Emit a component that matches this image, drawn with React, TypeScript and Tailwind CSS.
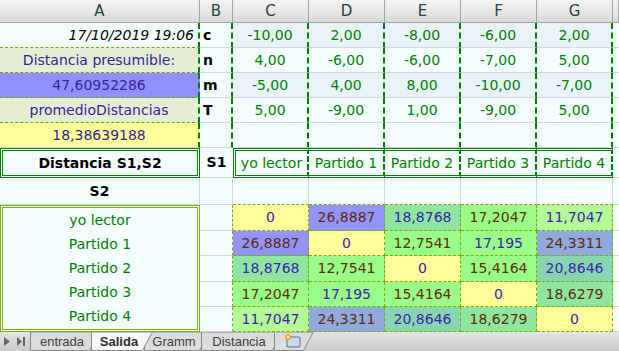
import React from 'react';

const font = 'font-["DejaVu_Sans",sans-serif]';

// plain grid lines
const gr = 'border-r border-r-[#d0d7e5]';
const gb = 'border-b border-b-[#d0d7e5]';
// dash-dot style borders (dashed approximation)
const dkR = 'border-r-2 border-r-[#008000] ![border-right-style:dashed]';
const olR = 'border-r border-r-[#7fa800] ![border-right-style:dashed]';
const olB = 'border-b border-b-[#7fa800] ![border-bottom-style:dashed]';
const ygB = 'border-b border-b-[#6aaa00] ![border-bottom-style:dashed]';

const Cell: React.FC<{ c?: string; children?: React.ReactNode }> = ({ c = '', children }) => (
  <div className={`flex items-center overflow-hidden whitespace-nowrap text-[14px] ${c}`}>{children}</div>
);

const params = [
  { k: 'c', v: ['-10,00', '2,00', '-8,00', '-6,00', '2,00'], stripe: true },
  { k: 'n', v: ['4,00', '-6,00', '-6,00', '-7,00', '5,00'], stripe: false },
  { k: 'm', v: ['-5,00', '4,00', '8,00', '-10,00', '-7,00'], stripe: true },
  { k: 'T', v: ['5,00', '-9,00', '1,00', '-9,00', '5,00'], stripe: false },
];

const leftA = [
  <Cell key="a1" c={`justify-end pr-[4px] italic text-[11px] text-black ${dkR} ${ygB}`}>17/10/2019 19:06</Cell>,
  <Cell key="a2" c={`justify-center bg-[#e3eed3] text-[#35249a] ${dkR} ${ygB}`}>Distancia presumible:</Cell>,
  <Cell key="a3" c={`justify-center bg-[#8f8fff] text-[#35249a] ${dkR} ${ygB}`}>47,60952286</Cell>,
  <Cell key="a4" c={`justify-center bg-[#e3eed3] text-[#35249a] ${dkR} ${ygB}`}>promedioDistancias</Cell>,
];

const names = ['yo lector', 'Partido 1', 'Partido 2', 'Partido 3', 'Partido 4'];

const Y = 'bg-[#ffff99]';
const BL = 'bg-[#9393ff]';
const MI = 'bg-[#8ee6a0]';
const GR = 'bg-[#99ff88]';
const ST = 'bg-[#8eaadf]';
const TE = 'bg-[#88d6b0]';
const LG = 'bg-[#b4fb98]';
const IN = 'text-[#3a22b0]';
const BR = 'text-[#5f2c05]';

const matrix: [string, string, string][][] = [
  [['0', Y, IN], ['26,8887', BL, BR], ['18,8768', MI, IN], ['17,2047', GR, BR], ['11,7047', LG, IN]],
  [['26,8887', BL, BR], ['0', Y, IN], ['12,7541', GR, BR], ['17,195', GR, IN], ['24,3311', ST, BR]],
  [['18,8768', MI, IN], ['12,7541', GR, BR], ['0', Y, IN], ['15,4164', GR, BR], ['20,8646', TE, IN]],
  [['17,2047', GR, BR], ['17,195', GR, IN], ['15,4164', GR, BR], ['0', Y, IN], ['18,6279', MI, BR]],
  [['11,7047', LG, IN], ['24,3311', ST, BR], ['20,8646', TE, IN], ['18,6279', MI, BR], ['0', Y, IN]],
];

const Tab: React.FC<{ w: number; label: string; active?: boolean }> = ({ w, label, active }) => (
  <div className={`relative -ml-[9px] h-[19px] flex items-center justify-center ${active ? 'z-10' : ''}`} style={{ width: w }}>
    <svg className="absolute inset-0" width={w} height={19}>
      <polygon
        points={`0.5,0 ${w - 0.5},0 ${w - 10.5},18.5 0.5,18.5`}
        fill={active ? '#f7f7f7' : '#dcdcdc'}
        stroke="#8a8a8a"
      />
    </svg>
    <span
      className={`relative pr-[6px] font-["Liberation_Sans",Arial,sans-serif] text-[13px] ${
        active ? 'font-bold text-[#303030]' : 'text-[#404040]'
      }`}
    >
      {label}
    </span>
  </div>
);

const App: React.FC = () => {
  return (
    <div className={`w-[619px] h-[351px] overflow-hidden bg-[#f4fefe] ${font}`}>
      {/* column headers */}
      <div className="grid grid-cols-[200px_33px_76px_76px_76px_76px_76px_6px] h-[23px] bg-gradient-to-b from-[#f4f4f4] to-[#dadada] border-b border-[#a5a5a5] text-[15px] text-[#27413e]">
        {['A', 'B', 'C', 'D', 'E', 'F', 'G', ''].map((h, i) => (
          <div key={i} className="flex items-center justify-center border-r border-[#a8a8a8]">{h}</div>
        ))}
      </div>

      {/* sheet body */}
      <div className="grid grid-cols-[200px_33px_76px_76px_76px_76px_76px_6px] grid-rows-[25px_25px_25px_25px_25px_30px_27px_26px_25px_26px_25px_25px] h-[308px]">
        {params.map((p, r) => (
          <React.Fragment key={p.k}>
            {leftA[r]}
            <Cell c={`pl-[3px] font-bold text-[13px] text-black ${dkR} ${gb}`}>{p.k}</Cell>
            {p.v.map((v, i) => (
              <Cell key={i} c={`justify-center text-[#008000] ${p.stripe ? 'bg-[#e9f4fa]' : ''} ${dkR} ${gb}`}>{v}</Cell>
            ))}
            <Cell c={gb} />
          </React.Fragment>
        ))}

        {/* row 5 */}
        <Cell c={`justify-center bg-[#ffff99] text-[#35249a] ${dkR} ${gb}`}>18,38639188</Cell>
        <Cell c={`${dkR} ${gb}`} />
        {[0, 1, 2, 3, 4].map((i) => (
          <Cell key={i} c={`${dkR} ${gb}`} />
        ))}
        <Cell c={gb} />

        {/* row 6 */}
        <Cell c="justify-center font-bold text-[13px] text-black border-[3px] border-double border-[#008000]">Distancia S1,S2</Cell>
        <Cell c={`justify-center font-bold text-[13px] text-black ${gb}`}>S1</Cell>
        {names.map((n, i) => (
          <Cell
            key={n}
            c={`justify-center text-[#008000] border-t-[3px] border-b-[3px] border-t-[#008000] border-b-[#008000] ![border-top-style:double] ![border-bottom-style:double] ${dkR} ${
              i === 0 ? 'border-l-[3px] border-l-[#008000] ![border-left-style:double]' : ''
            }`}
          >
            {n}
          </Cell>
        ))}
        <Cell c={gb} />

        {/* row 7 */}
        <Cell c={`justify-center font-bold text-[13px] text-black ${gr} ${gb}`}>S2</Cell>
        <Cell c={`${gr} ${gb}`} />
        {[0, 1, 2, 3, 4].map((i) => (
          <Cell key={i} c={`${gr} ${olB}`} />
        ))}
        <Cell c={gb} />

        {/* rows 8-12 */}
        {matrix.map((row, r) => (
          <React.Fragment key={r}>
            {r === 0 && (
              <div className="row-span-5 flex flex-col border-[3px] border-double border-[#7fb000] text-[14px] text-[#008000]">
                {names.map((n, i) => (
                  <div key={n} className={`flex items-center justify-center ${i === 1 || i === 3 ? 'h-[25px]' : 'h-[25.5px]'}`}>{n}</div>
                ))}
              </div>
            )}
            <Cell c={`${olR} ${gb}`} />
            {row.map(([v, bg, tc], i) => (
              <Cell key={i} c={`justify-center ${bg} ${tc} ${olR} ${olB}`}>{v}</Cell>
            ))}
            <Cell c={gb} />
          </React.Fragment>
        ))}
      </div>

      {/* sheet tabs */}
      <div className="flex items-start h-[20px] border-t border-[#b0b0b0] bg-gradient-to-b from-[#e4e4e4] to-[#cbcbcb] text-[#404040]">
        <div className="flex items-center gap-[7px] w-[39px] h-[19px] pl-[4px]">
          <svg width="6" height="9" viewBox="0 0 6 9"><polygon points="0,0 6,4.5 0,9" fill="#666" /></svg>
          <svg width="8" height="9" viewBox="0 0 8 9"><polygon points="0,0 5,4.5 0,9" fill="#666" /><rect x="6" y="0" width="2" height="9" fill="#666" /></svg>
        </div>
        <Tab w={70} label="entrada" />
        <Tab w={62} label="Salida" active />
        <Tab w={66} label="Gramm" />
        <Tab w={82} label="Distancia" />
        <div className="relative -ml-[9px] w-[40px] h-[19px]">
          <svg className="absolute inset-0" width="40" height="19">
            <polygon points="0.5,0 39.5,0 29.5,18.5 0.5,18.5" fill="#dcdcdc" stroke="#8a8a8a" />
            <rect x="13" y="5" width="13" height="10" rx="1" fill="#c9d8ea" stroke="#5a6f8f" />
            <circle cx="14" cy="5" r="3" fill="#f5a623" />
            <circle cx="14" cy="5" r="1.3" fill="#fff2b0" />
          </svg>
        </div>
      </div>
    </div>
  );
};

export default App;
